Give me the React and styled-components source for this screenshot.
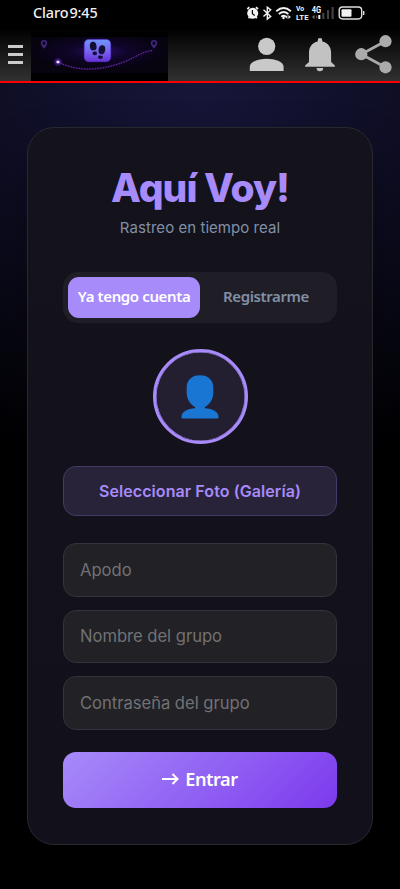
import React, { useState } from 'react';
import styled, { createGlobalStyle } from 'styled-components';

const GlobalStyle = createGlobalStyle`
  * {
    box-sizing: border-box;
  }

  body {
    margin: 0;
    background: #000;
    font-family: Inter, 'Liberation Sans', sans-serif;
  }

  button,
  input {
    font-family: inherit;
  }
`;

const Screen = styled.div`
  height: 889px;
  overflow: hidden;
  display: flex;
  flex-direction: column;
  background: #000;
`;

const StatusBar = styled.div`
  height: 28px;
  flex-shrink: 0;
  display: flex;
  align-items: center;
  justify-content: space-between;
  padding: 0 35px 3px 33px;
  color: #f2f2f2;
`;

const Carrier = styled.span`
  font-family: 'Noto Sans', sans-serif;
  font-size: 14.4px;
  font-weight: 500;
  letter-spacing: -0.1px;
  word-spacing: -2.6px;
  white-space: nowrap;
`;

const StatusIcons = styled.svg`
  display: block;
  width: 120px;
  height: 18px;
  font-family: Roboto, sans-serif;
`;

const Header = styled.header`
  height: 55px;
  flex-shrink: 0;
  display: flex;
  background: linear-gradient(180deg, #000 0%, #313131 100%);
  border-bottom: 2px solid #f80000;
`;

const MenuButton = styled.button`
  width: 31px;
  padding: 17px 8px 17px;
  display: flex;
  flex-direction: column;
  justify-content: space-between;
  background: none;
  border: none;
`;

const MenuLine = styled.span`
  height: 3px;
  width: 15px;
  background: #cbcbcb;
`;

const Banner = styled.svg`
  display: block;
  width: 137px;
  height: 53px;
`;

const HeaderActions = styled.svg`
  display: block;
  width: 152px;
  height: 53px;
  margin-left: auto;
`;

const Main = styled.main`
  flex: 1;
  padding: 44px 27px;
  background: radial-gradient(ellipse 560px 400px at 50% 0, #17163a 0%, #000 100%);
`;

const Card = styled.section`
  height: 718px;
  padding: 38px 35px 35px;
  display: flex;
  flex-direction: column;
  background: linear-gradient(180deg, #14131c, #12111b);
  border: 1px solid #29282f;
  border-radius: 27px;
  box-shadow: 0 22px 46px rgba(0, 0, 0, 0.3);
`;

const Title = styled.h1`
  margin: 0;
  height: 44px;
  line-height: 44px;
  text-align: center;
  font-size: 39px;
  font-weight: 800;
  letter-spacing: -1px;
  color: #a78bfa;
`;

const Subtitle = styled.p`
  margin: 7px 0 35px;
  height: 20px;
  line-height: 21px;
  text-align: center;
  font-size: 15px;
  letter-spacing: 0.05px;
  color: #8290a6;
`;

const Tabs = styled.div`
  height: 51px;
  flex-shrink: 0;
  padding: 5px 5px;
  display: flex;
  background: #1f1e27;
  border-radius: 15px;
`;

const Tab = styled.button`
  width: 132px;
  padding: 0 0 3px;
  border: none;
  border-radius: 11px;
  background: ${props => (props.$active ? '#a78bfa' : 'transparent')};
  color: ${props => (props.$active ? '#fff' : '#8290a6')};
  font-family: 'Noto Sans', sans-serif;
  font-size: 15px;
  font-weight: 600;
  letter-spacing: -0.38px;
  white-space: nowrap;
`;

const Avatar = styled.div`
  width: 95px;
  height: 95px;
  flex-shrink: 0;
  margin: 26px auto 22px;
  padding-top: 1px;
  display: flex;
  align-items: center;
  justify-content: center;
  background: #231f31;
  border: 3px solid #a78bfa;
  border-radius: 50%;
  box-shadow: inset 0 0 0 0.5px #a78bfa;
`;

const PhotoButton = styled.button`
  height: 50px;
  flex-shrink: 0;
  margin-bottom: 27px;
  padding: 0;
  background: #282339;
  border: 1px solid #453b69;
  border-radius: 13px;
  color: #a78bfa;
  font-size: 16px;
  font-weight: 600;
  letter-spacing: 0.08px;
`;

const Fields = styled.div`
  display: flex;
  flex-direction: column;
  gap: 13px;
`;

const Field = styled.input`
  width: 100%;
  height: 53.6px;
  padding: 0 16px;
  background: #212126;
  border: 1px solid #34333d;
  border-radius: 13px;
  outline: none;
  color: #fff;
  font-size: 16.6px;
  letter-spacing: -0.02px;

  &::placeholder {
    color: #717174;
    opacity: 1;
  }
`;

const SubmitButton = styled.button`
  height: 56.4px;
  flex-shrink: 0;
  margin-top: 21.8px;
  padding: 0 0 1px;
  display: flex;
  align-items: center;
  justify-content: center;
  gap: 6px;
  border: none;
  border-radius: 13px;
  background: linear-gradient(135deg, #a78bfa, #7c3aed);
  color: #fff;
  font-family: 'Noto Sans', sans-serif;
  font-size: 18.2px;
  font-weight: 600;
  letter-spacing: -0.45px;
`;

const StatusIconRow = () => (
  <StatusIcons viewBox="245 3 120 18" fill="none">
    {/* alarm */}
    <circle cx="252.7" cy="12.3" r="5.5" fill="#f2f2f2" />
    <path d="M247.3 8.2l2-2M256 6.2l2 2M248.5 17.2l1-1M255.9 16.2l1 1" stroke="#f2f2f2" strokeWidth="1.7" />
    <path d="M252.4 9v3.7l2.3 1.8" stroke="#000" strokeWidth="1.2" />
    {/* bluetooth */}
    <path d="M263.5 8.8l7.2 6.6-3.4 2.7V6.2l3.4 2.7-7.2 6.5" stroke="#f2f2f2" strokeWidth="1.4" />
    {/* wifi */}
    <path d="M276.3 10.2q7.3-6.4 14.6 0M278.8 13q4.8-4.1 9.6 0M281.3 15.7q2.3-2 4.6 0" stroke="#f2f2f2" strokeWidth="1.8" />
    <circle cx="283.5" cy="17" r="1.2" fill="#f2f2f2" />
    <path d="M287.4 14v4l-2-2zM288.4 14v4l2.5-2z" fill="#f2f2f2" />
    <text x="296" y="10.3" fontSize="6.8" fontWeight="700" fill="#f2f2f2">Vo</text>
    <text x="296" y="18.6" fontSize="6.8" fontWeight="700" fill="#f2f2f2" textLength="12.5" lengthAdjust="spacingAndGlyphs">LTE</text>
    <text x="311.7" y="11.7" fontSize="8.4" fontWeight="700" fill="#f2f2f2" textLength="9.4" lengthAdjust="spacingAndGlyphs">4G</text>
    {/* signal */}
    <path d="M314.5 14v4l-2.5-2z" fill="#777" />
    <path d="M316 14v4l1.6-2z" fill="#555" />
    <rect x="318.3" y="14" width="2" height="4" fill="#f2f2f2" />
    <path d="M323.3 18v-6.2M328 18v-9M332.6 18V6" stroke="#424242" strokeWidth="2.1" />
    {/* battery */}
    <rect x="339.2" y="6" width="22.5" height="12" rx="3.4" stroke="#dedede" strokeWidth="1.4" />
    <rect x="341.5" y="8.3" width="10" height="7.5" rx="1" fill="#f2f2f2" />
    <path d="M363.7 10v4" stroke="#dedede" strokeWidth="1.4" />
  </StatusIcons>
);

const Pin = ({ x }) => (
  <path
    transform={`translate(${x} 12)`}
    d="M0 8.8C-1.6 6.4-3.2 5-3.2 3.2a3.2 3.2 0 1 1 6.4 0C3.2 5 1.6 6.4 0 8.8zM0 1.6a1.6 1.6 0 1 0 0 3.2 1.6 1.6 0 0 0 0-3.2z"
    fill="#42257f"
    fillRule="evenodd"
  />
);

const RouteBanner = () => (
  <Banner viewBox="0 0 137 53" fill="none">
    <defs>
      <radialGradient id="glow" cx="0.5" cy="0.4" r="0.5">
        <stop offset="0" stopColor="#2c0d6c" />
        <stop offset="0.4" stopColor="#10052b" />
        <stop offset="1" stopColor="#07030f" />
      </radialGradient>
      <linearGradient id="tile" x1="0" y1="0" x2="0" y2="1">
        <stop offset="0" stopColor="#6f96fa" />
        <stop offset="0.5" stopColor="#7769ef" />
        <stop offset="1" stopColor="#6830d7" />
      </linearGradient>
      <radialGradient id="spark">
        <stop offset="0" stopColor="#8f4df5" />
        <stop offset="1" stopColor="#4a16a5" stopOpacity="0" />
      </radialGradient>
    </defs>
    <rect y="4" width="137" height="49" fill="#000" />
    <rect y="9" width="137" height="36" fill="url(#glow)" />
    <Pin x={13} />
    <Pin x={123} />
    <path d="M27 34C47 44 69 43 93 34C105 29 112 23 122 22.5" stroke="#351064" strokeWidth="2" opacity="0.45" />
    <path d="M27 34C47 44 69 43 93 34C105 29 112 23 122 22.5" stroke="#6e38b0" strokeWidth="1" strokeDasharray="1.2 1.5" />
    <circle cx="27" cy="34" r="5" fill="url(#spark)" />
    <rect x="25.5" y="32.8" width="3" height="2.4" rx="1" fill="#eee0ff" />
    <rect x="53.3" y="11.4" width="26.4" height="22.2" rx="4.5" fill="url(#tile)" stroke="#633ee0" strokeWidth="0.7" />
    {/* footprints */}
    <g fill="#140f36">
      <ellipse cx="62.2" cy="18.2" rx="3.3" ry="4.4" transform="rotate(-8 62.2 18.2)" />
      <ellipse cx="63.8" cy="25.2" rx="2.2" ry="2" />
      <ellipse cx="70.9" cy="21.8" rx="3.3" ry="4.5" transform="rotate(10 70.9 21.8)" />
      <ellipse cx="69.4" cy="29" rx="2.4" ry="2" />
    </g>
    <path d="M60.8 23.3l4.8-.9M67 26.6l4.6 1" stroke="#7165e9" strokeWidth="0.8" />
  </Banner>
);

const HeaderIcons = () => (
  <HeaderActions viewBox="248 28 152 53">
    {/* profile */}
    <g fill="#c9c9c9">
      <circle cx="266.7" cy="46.3" r="8.6" />
      <path d="M249.8 71v-4.2c0-5.2 8.8-8 16.9-8s16.9 2.8 16.9 8V71z" />
    </g>
    {/* notifications */}
    <g fill="#c2c2c2">
      <path d="M317.7 41.5v-1.3a2.3 2.3 0 0 1 4.6 0v1.3c5.6 1.2 8.8 5.6 8.8 11.2v9.2l3.8 3.5v1.3h-29.8v-1.3l3.9-3.5v-9.2c0-5.6 3.1-10 8.7-11.2z" />
      <path d="M316.6 68h6.6a3.3 3.3 0 0 1-6.6 0z" />
    </g>
    {/* share */}
    <path d="M385.4 41.3L361.3 54.2l24.1 13" fill="none" stroke="#a9a9a9" strokeWidth="2.8" />
    <g fill="#ababab">
      <circle cx="385.5" cy="41.2" r="6.1" />
      <circle cx="361.3" cy="54.2" r="6.1" />
      <circle cx="385.5" cy="67.3" r="6.1" />
    </g>
  </HeaderActions>
);

const App = () => {
  const [mode, setMode] = useState('login');

  return (
    <>
      <GlobalStyle />
      <Screen>
        <StatusBar>
          <Carrier>Claro 9:45</Carrier>
          <StatusIconRow />
        </StatusBar>
        <Header>
          <MenuButton aria-label="Menú">
            <MenuLine />
            <MenuLine />
            <MenuLine />
          </MenuButton>
          <RouteBanner />
          <HeaderIcons />
        </Header>
        <Main>
          <Card>
            <Title>Aquí Voy!</Title>
            <Subtitle>Rastreo en tiempo real</Subtitle>
            <Tabs>
              <Tab $active={mode === 'login'} onClick={() => setMode('login')}>
                Ya tengo cuenta
              </Tab>
              <Tab $active={mode === 'register'} onClick={() => setMode('register')}>
                Registrarme
              </Tab>
            </Tabs>
            <Avatar>
              <svg width="38" height="44" viewBox="0 0 38 44" fill="#1976d2">
                <path d="M19 .3c8.3 0 13.3 4.8 13.3 12.6v4.8c0 6.1-3.4 11.5-8.4 14.3v1.2c7.5.5 13.6 3.5 13.6 8.4v2H.5v-2c0-4.9 6.1-7.9 13.6-8.4V32C9.1 29.2 5.7 23.8 5.7 17.7v-4.8C5.7 5.1 10.7.3 19 .3z" />
              </svg>
            </Avatar>
            <PhotoButton>Seleccionar Foto (Galería)</PhotoButton>
            <Fields>
              <Field placeholder="Apodo" />
              <Field placeholder="Nombre del grupo" />
              <Field placeholder="Contraseña del grupo" type="text" />
            </Fields>
            <SubmitButton>
              <svg width="17" height="14" viewBox="0 0 17 14" fill="none" stroke="#fff" strokeWidth="2">
                <path d="M0 7h15.5M10.5 2l5 5-5 5" />
              </svg>
              Entrar
            </SubmitButton>
          </Card>
        </Main>
      </Screen>
    </>
  );
};

export default App;
